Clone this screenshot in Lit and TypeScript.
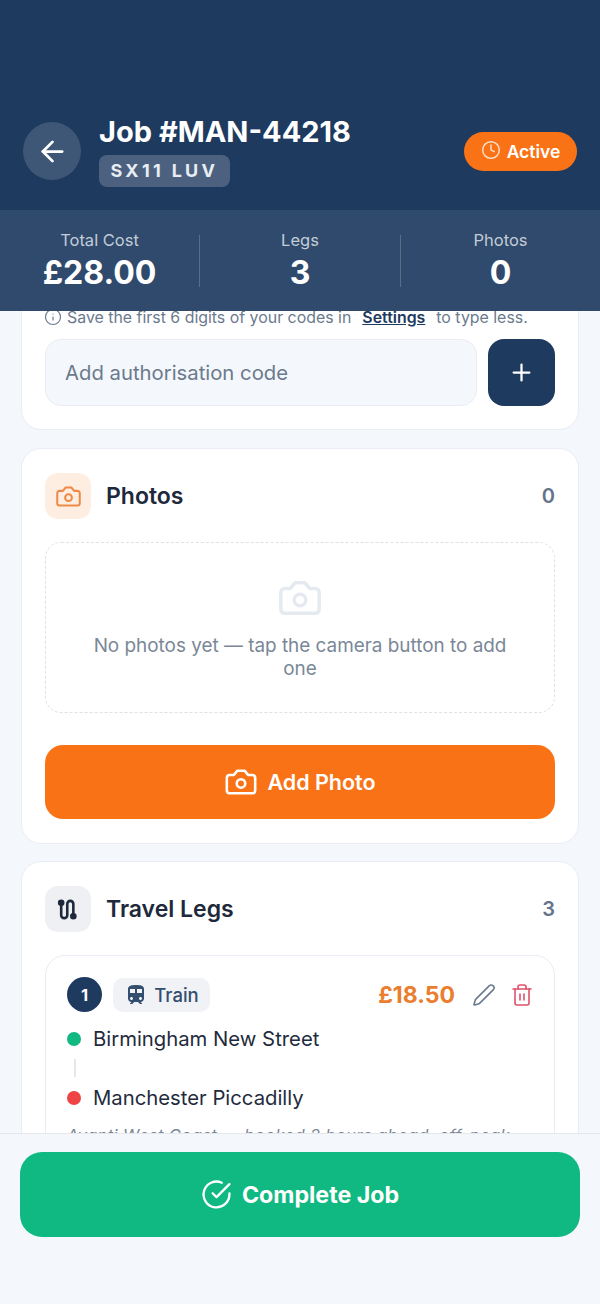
import { LitElement, html, css, svg } from "lit";
import { customElement } from "lit/decorators.js";

const ic = (body: unknown, cls = "") => html`<svg class="i ${cls}" viewBox="0 0 24 24" fill="none" stroke="currentColor" stroke-width="2" stroke-linecap="round" stroke-linejoin="round">${body}</svg>`;
const camera = svg`<path d="M14.5 4h-5L7 7H4a2 2 0 0 0-2 2v9a2 2 0 0 0 2 2h16a2 2 0 0 0 2-2V9a2 2 0 0 0-2-2h-3l-2.5-3z"/><circle cx="12" cy="13" r="3"/>`;

@customElement("app-root")
export class AppRoot extends LitElement {
  static styles = css`
    :host { display: flex; flex-direction: column; height: 100vh; overflow: hidden; background: #f4f7fb; font-family: Inter, "Liberation Sans", sans-serif; color: #1e293b; }
    * { box-sizing: border-box; }
    .i { display: block; flex: none; }
    .top { background: #1e3a5f; color: #fff; height: 210px; padding: 122px 23px 0 23px; display: flex; align-items: flex-start; flex: none; }
    .back { width: 58px; height: 58px; border-radius: 50%; background: rgba(255,255,255,.15); display: flex; align-items: center; justify-content: center; flex: none; margin-right: 18px; }
    .back .i { width: 33px; height: 33px; stroke-width: 2; }
    .ident { flex: 1; margin-top: -7px; }
    h1 { margin: 0; font-size: 29px; line-height: 34px; font-weight: 700; letter-spacing: 0; }
    .plate { display: inline-block; margin-top: 6px; height: 32px; line-height: 32px; padding: 0 11.5px; border-radius: 8px; background: rgba(255,255,255,.2); font-size: 18px; font-weight: 700; letter-spacing: 3.3px; color: #e8edf3; }
    .badge { height: 39px; width: 113px; margin-top: 10px; border-radius: 20px; background: #f97316; display: flex; align-items: center; justify-content: center; gap: 6px; font-size: 17.5px; font-weight: 600; }
    .badge .i { width: 20px; height: 20px; opacity: .75; margin-top: -3px; stroke-width: 1.8; }
    .stats { height: 101px; flex: none; background: #2f4a6c; display: grid; grid-template-columns: 200px 201px 199px; padding-top: 25px; color: #fff; position: relative; z-index: 1; }
    .stat { height: 52px; display: flex; flex-direction: column; align-items: center; border-right: 1px solid rgba(255,255,255,.2); }
    .stat:last-child { border-right: 0; }
    .stat span { font-size: 16.5px; line-height: 14px; color: #c3ccd7; margin-top: -2px; }
    .stat b { font-size: 32px; line-height: 38px; font-weight: 700; margin-top: 7px; }
    main { flex: 1; min-height: 0; overflow: hidden; padding: 0 21px; display: flex; flex-direction: column; gap: 18px; }
    .card { flex: none; background: #fff; border: 1px solid #e9edf3; border-radius: 20px; padding: 24px 23px; }
    .codes { margin-top: -5px; border-top: 0; padding-top: 0; padding-bottom: 23px; border-radius: 0 0 20px 20px; }
    .hint { display: flex; align-items: center; height: 22px; font-size: 15.9px; color: #6b7a8d; white-space: pre; margin-bottom: 11px; }
    .hint .i { width: 18px; height: 18px; margin: 0 5px 0 -1px; stroke-width: 1.6; }
    .hint a { color: #1e3a5f; font-weight: 600; text-decoration: underline; margin: 0 11px; }
    .addrow { display: flex; gap: 11px; }
    .input { flex: 1; height: 67px; border: 1px solid #e9edf3; background: #f4f7fb; border-radius: 16px; display: flex; align-items: center; padding-left: 19px; font-size: 20.3px; color: #6b7a8d; }
    .plus { width: 67px; height: 67px; border-radius: 16px; background: #1e3a5f; color: #fff; display: flex; align-items: center; justify-content: center; }
    .plus .i { width: 27px; height: 27px; stroke-width: 2; }
    .head { display: flex; align-items: center; gap: 15px; height: 46px; }
    .tile { width: 46px; height: 46px; border-radius: 13px; display: flex; align-items: center; justify-content: center; }
    .tile .i { width: 27px; height: 27px; stroke-width: 1.8; }
    .tile.o { background: #feeee2; color: #ee8a45; }
    .tile.g { background: #eef0f4; color: #1e293b; }
    .tile.g .i { stroke-width: 2.3; }
    h2 { margin: 0; flex: 1; font-size: 23px; font-weight: 600; color: #1e293b; }
    .n { font-size: 20px; font-weight: 600; color: #64748b; }
    .empty { margin-top: 23px; height: 171px; border: 1px dashed #dde2e9; border-radius: 16px; display: flex; flex-direction: column; align-items: center; padding: 32px 30px 0; text-align: center; font-size: 18.9px; line-height: 23px; color: #7a8797; }
    .empty .i { width: 46px; height: 46px; color: #e5eaf0; stroke-width: 1.8; margin-bottom: 13px; }
    .cta { margin-top: 32px; height: 74px; border-radius: 18px; background: #f97316; color: #fff; display: flex; align-items: center; justify-content: center; gap: 9px; font-size: 21.5px; font-weight: 600; }
    .cta .i { width: 34px; height: 34px; stroke-width: 1.8; }
    .legs { margin-top: -1px; }
    .leg { margin-top: 23px; border: 1px solid #e9edf3; border-radius: 20px; padding: 21px 20px 21px 21px; }
    .legtop { display: flex; align-items: center; height: 35px; }
    .num { width: 35px; height: 35px; border-radius: 50%; background: #1e3a5f; color: #fff; display: flex; align-items: center; justify-content: center; font-size: 16.5px; font-weight: 700; margin-right: 11px; }
    .chip { height: 34px; width: 97px; border-radius: 10px; background: #f0f2f6; color: #334e6e; display: flex; align-items: center; justify-content: center; gap: 6px; font-size: 18.5px; font-weight: 500; }
    .chip .i { width: 24px; height: 24px; }
    .price { margin-left: auto; font-size: 23px; font-weight: 700; color: #ea7e2e; }
    .edit { width: 24px; height: 24px; margin-left: 17px; color: #6b7a8d; stroke-width: 1.6; }
    .del { width: 24px; height: 24px; margin-left: 14px; color: #e0526b; stroke-width: 1.6; }
    .stop { display: flex; align-items: center; gap: 12px; font-size: 20.3px; line-height: 28px; color: #1f2b3d; }
    .dot { width: 14px; height: 14px; border-radius: 50%; }
    .first { margin-top: 13px; }
    .line { width: 2px; height: 18px; background: #e5e7eb; margin: 6px 0 7px 7px; }
    .note { margin-top: 13px; font-size: 16.5px; font-style: italic; letter-spacing: .42px; color: #7a8797; white-space: nowrap; }
    footer { flex: none; height: 171px; position: relative; z-index: 1; background: #f4f7fb; border-top: 1px solid #e5e7eb; padding: 18px 20px 0; }
    .done { height: 85px; border-radius: 22px; background: #10b981; color: #fff; display: flex; align-items: center; justify-content: center; gap: 10px; font-size: 23.2px; font-weight: 700; }
    .done .i { width: 31px; height: 31px; stroke-width: 1.8; }
  `;

  render() {
    return html`
      <header class="top">
        <div class="back">${ic(svg`<path d="m12 19-7-7 7-7"/><path d="M19 12H5"/>`)}</div>
        <div class="ident">
          <h1>Job #MAN-44218</h1>
          <div class="plate">SX11 LUV</div>
        </div>
        <div class="badge">${ic(svg`<circle cx="12" cy="12" r="10"/><polyline points="12 6 12 12 16 14"/>`)}Active</div>
      </header>
      <section class="stats">
        <div class="stat"><span>Total Cost</span><b>£28.00</b></div>
        <div class="stat"><span>Legs</span><b>3</b></div>
        <div class="stat"><span>Photos</span><b>0</b></div>
      </section>
      <main>
        <section class="card codes">
          <div class="hint">${ic(svg`<circle cx="12" cy="12" r="10"/><path d="M12 16v-4"/><path d="M12 8h.01"/>`)}Save the first 6 digits of your codes in<a>Settings</a>to type less.</div>
          <div class="addrow">
            <div class="input">Add authorisation code</div>
            <div class="plus">${ic(svg`<path d="M5 12h14"/><path d="M12 5v14"/>`)}</div>
          </div>
        </section>
        <section class="card">
          <div class="head"><div class="tile o">${ic(camera)}</div><h2>Photos</h2><span class="n">0</span></div>
          <div class="empty">${ic(camera)}No photos yet — tap the camera button to add one</div>
          <div class="cta">${ic(camera)}Add Photo</div>
        </section>
        <section class="card legs">
          <div class="head"><div class="tile g">${ic(svg`<circle cx="5.500" cy="6" r="1.800" fill="currentColor"/><path d="M5.500 8v9a2.700 2.700 0 0 0 5.400 0V7a2.700 2.700 0 0 1 5.400 0v9"/><circle cx="16.300" cy="18" r="1.800" fill="currentColor"/>`)}</div><h2>Travel Legs</h2><span class="n">3</span></div>
          <div class="leg">
            <div class="legtop">
              <div class="num">1</div>
              <div class="chip"><svg class="i" viewBox="0 0 24 24" fill="currentColor"><path d="M12 2c-4 0-8 .5-8 4v9.500C4 17.430 5.570 19 7.500 19L6 20.500v.5h2.230l2-2H14l2 2h2v-.5L16.500 19c1.930 0 3.500-1.570 3.500-3.500V6c0-3.500-3.580-4-8-4zM7.500 17c-.83 0-1.500-.67-1.500-1.500S6.670 14 7.500 14s1.500.67 1.500 1.500S8.330 17 7.500 17zm3.500-7H6V6h5v4zm2 0V6h5v4h-5zm3.500 7c-.83 0-1.500-.67-1.500-1.500s.67-1.500 1.500-1.500 1.500.67 1.500 1.500-.67 1.500-1.500 1.500z"/></svg>Train</div>
              <div class="price">£18.50</div>
              ${ic(svg`<path d="M21.174 6.812a1 1 0 0 0-3.986-3.987L3.842 16.174a2 2 0 0 0-.5.83l-1.321 4.352a.5.5 0 0 0 .623.622l4.353-1.32a2 2 0 0 0 .83-.497z"/>`, "edit")}
              ${ic(svg`<path d="M3 6h18"/><path d="M19 6v14c0 1-1 2-2 2H7c-1 0-2-1-2-2V6"/><path d="M8 6V4c0-1 1-2 2-2h4c1 0 2 1 2 2v2"/><path d="M10 11v6"/><path d="M14 11v6"/>`, "del")}
            </div>
            <div class="stop first"><span class="dot" style="background:#10b981"></span>Birmingham New Street</div>
            <div class="line"></div>
            <div class="stop"><span class="dot" style="background:#ef4444"></span>Manchester Piccadilly</div>
            <div class="note">Avanti West Coast — booked 2 hours ahead, off-peak</div>
          </div>
        </section>
      </main>
      <footer>
        <div class="done">${ic(svg`<path d="M22 11.080V12a10 10 0 1 1-5.930-9.140"/><polyline points="22 4 12 14.010 9 11.010"/>`)}Complete Job</div>
      </footer>
    `;
  }
}
